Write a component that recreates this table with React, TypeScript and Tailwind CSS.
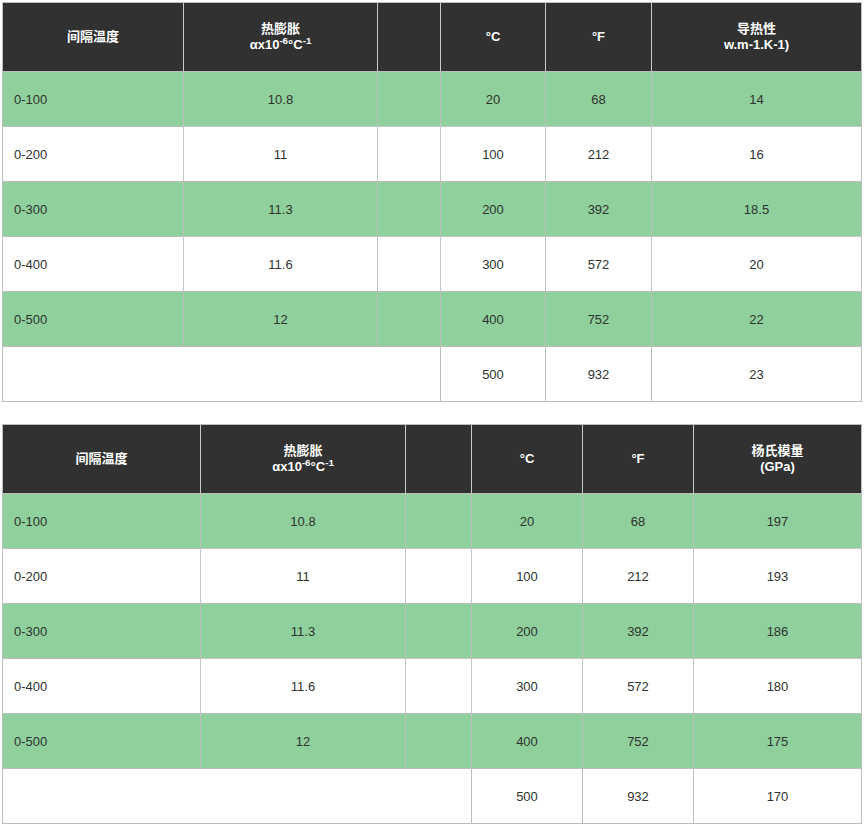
import React from "react";

type Row = { range: string; exp: string; c: string; f: string; v: string };

const table1: Row[] = [
  { range: "0-100", exp: "10.8", c: "20", f: "68", v: "14" },
  { range: "0-200", exp: "11", c: "100", f: "212", v: "16" },
  { range: "0-300", exp: "11.3", c: "200", f: "392", v: "18.5" },
  { range: "0-400", exp: "11.6", c: "300", f: "572", v: "20" },
  { range: "0-500", exp: "12", c: "400", f: "752", v: "22" },
];

const table2: Row[] = [
  { range: "0-100", exp: "10.8", c: "20", f: "68", v: "197" },
  { range: "0-200", exp: "11", c: "100", f: "212", v: "193" },
  { range: "0-300", exp: "11.3", c: "200", f: "392", v: "186" },
  { range: "0-400", exp: "11.6", c: "300", f: "572", v: "180" },
  { range: "0-500", exp: "12", c: "400", f: "752", v: "175" },
];

function DataTable({
  widths,
  rows,
  last,
  title,
  unit,
}: {
  widths: number[];
  rows: Row[];
  last: { c: string; f: string; v: string };
  title: string;
  unit: string;
}) {
  const th = "border-l border-[#c9c9c9] px-2 align-middle text-center font-bold text-white";
  return (
    <table className="w-[860px] table-fixed border-separate border-spacing-0 border border-[#bdbdbd] text-[13px] text-[#2e332e]">
      <colgroup>
        {widths.map((w, i) => (
          <col key={i} style={{ width: w }} />
        ))}
      </colgroup>
      <thead>
        <tr className="h-[68px] bg-[#313131] leading-[16px]">
          <th className="px-2 text-center align-middle font-bold text-white">间隔温度</th>
          <th className={th}>
            热膨胀
            <br />
            αx10<sup>-6</sup>°C<sup>-1</sup>
          </th>
          <th className={th}></th>
          <th className={th}>°C</th>
          <th className={th}>°F</th>
          <th className={th}>
            {title}
            <br />
            {unit}
          </th>
        </tr>
      </thead>
      <tbody>
        {rows.map((r, i) => {
          const green = i % 2 === 0;
          const bl = green ? "border-l border-[#a5d8ae]" : "border-l border-[#c4c4c4]";
          return (
            <tr key={r.range} className={`h-[55px] ${green ? "bg-[#90d09c]" : "bg-white"}`}>
              <td className="border-t border-[#bdbdbd] pl-[11px] pt-[2px]">{r.range}</td>
              <td className={`border-t border-[#bdbdbd] pt-[2px] text-center ${bl}`}>{r.exp}</td>
              <td className={`border-t border-[#bdbdbd] ${bl}`}></td>
              <td className={`border-t border-[#bdbdbd] pt-[2px] text-center ${bl}`}>{r.c}</td>
              <td className={`border-t border-[#bdbdbd] pt-[2px] text-center ${bl}`}>{r.f}</td>
              <td className={`border-t border-[#bdbdbd] pt-[2px] text-center ${bl}`}>{r.v}</td>
            </tr>
          );
        })}
        <tr className="h-[55px] bg-white">
          <td colSpan={3} className="border-t border-[#bdbdbd]"></td>
          <td className="border-t border-l border-[#bdbdbd] pt-[2px] text-center">{last.c}</td>
          <td className="border-t border-l border-[#bdbdbd] pt-[2px] text-center">{last.f}</td>
          <td className="border-t border-l border-[#bdbdbd] pt-[2px] text-center">{last.v}</td>
        </tr>
      </tbody>
    </table>
  );
}

export default function App() {
  return (
    <div
      className="min-h-[830px] bg-white px-[2px] pt-[2px]"
      style={{ fontFamily: '"Liberation Sans", Arial, "Noto Sans CJK SC", sans-serif' }}
    >
      <DataTable
        widths={[180, 194, 63, 105, 106, 210]}
        rows={table1}
        last={{ c: "500", f: "932", v: "23" }}
        title="导热性"
        unit="w.m-1.K-1)"
      />
      <div className="h-[22px]" />
      <DataTable
        widths={[197, 205, 66, 111, 111, 168]}
        rows={table2}
        last={{ c: "500", f: "932", v: "170" }}
        title="杨氏模量"
        unit="(GPa)"
      />
    </div>
  );
}
